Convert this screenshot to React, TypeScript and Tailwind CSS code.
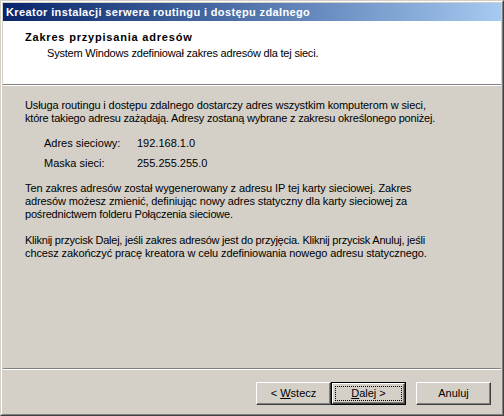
import React from "react";

const font = { fontFamily: '"Liberation Sans", Arial, sans-serif' };

function Btn({ children, def }: { children: React.ReactNode; def?: boolean }) {
  if (def) {
    return (
      <div className="w-[75px] h-[23px] border border-black">
        <div className="w-full h-full border border-t-white border-l-white border-r-[#404040] border-b-[#404040] shadow-[inset_-1px_-1px_0_#808080] flex items-center justify-center text-[11px] leading-[13px] text-black outline-1 outline-dotted outline-black outline-offset-[-4px]">
          <span className="whitespace-pre">{children}</span>
        </div>
      </div>
    );
  }
  return (
    <div className="w-[75px] h-[23px] border border-t-white border-l-white border-r-[#404040] border-b-[#404040] shadow-[inset_-1px_-1px_0_#808080] flex items-center justify-center text-[11px] leading-[13px] text-black">
      <span className="whitespace-pre">{children}</span>
    </div>
  );
}

export default function App() {
  return (
    <div
      className="w-[504px] h-[416px] border border-t-[#d4d0c8] border-l-[#d4d0c8] border-r-[#404040] border-b-[#404040] flex"
      style={font}
    >
      <div className="flex-1 border border-t-white border-l-white border-r-[#808080] border-b-[#808080] p-px bg-[#d4d0c8] flex flex-col">
        <div className="h-[18px] shrink-0 bg-gradient-to-r from-[#0a246a] to-[#a6caf0] flex items-center pl-[3px] text-white font-bold text-[11px] leading-[13px] tracking-[0.37px]">
          Kreator instalacji serwera routingu i dostępu zdalnego
        </div>
        <div className="h-[63px] shrink-0 bg-white pt-[10px] pl-[22px] text-black">
          <div className="font-bold text-[11px] leading-[13px] tracking-[0.8px]">Zakres przypisania adresów</div>
          <div className="text-[11px] leading-[13px] mt-[3px] pl-[22px] tracking-[-0.2px]">
            System Windows zdefiniował zakres adresów dla tej sieci.
          </div>
        </div>
        <div className="h-px bg-[#808080] shrink-0" />
        <div className="h-px bg-white shrink-0" />
        <div className="flex-1 pt-[13px] pl-[22px] pr-[4px] text-[11px] leading-[13px] text-black whitespace-nowrap">
          <div>
            <div className="tracking-[-0.11px]">Usługa routingu i dostępu zdalnego dostarczy adres wszystkim komputerom w sieci,</div>
            <div className="tracking-[-0.2px]">które takiego adresu zażądają. Adresy zostaną wybrane z zakresu określonego poniżej.</div>
          </div>
          <div className="mt-[12px] ml-[19px] flex flex-col gap-[7px]">
            <div className="flex">
              <span className="w-[93px]">Adres sieciowy:</span>
              <span>192.168.1.0</span>
            </div>
            <div className="flex">
              <span className="w-[93px]">Maska sieci:</span>
              <span>255.255.255.0</span>
            </div>
          </div>
          <div className="mt-[12px]">
            <div className="tracking-[-0.09px]">Ten zakres adresów został wygenerowany z adresu IP tej karty sieciowej. Zakres</div>
            <div className="tracking-[-0.11px]">adresów możesz zmienić, definiując nowy adres statyczny dla karty sieciowej za</div>
            <div className="tracking-[-0.19px]">pośrednictwem folderu Połączenia sieciowe.</div>
          </div>
          <div className="mt-[13px]">
            <div className="tracking-[-0.24px]">Kliknij przycisk Dalej, jeśli zakres adresów jest do przyjęcia. Kliknij przycisk Anuluj, jeśli</div>
            <div className="tracking-[-0.1px]">chcesz zakończyć pracę kreatora w celu zdefiniowania nowego adresu statycznego.</div>
          </div>
        </div>
        <div className="h-px bg-[#808080] shrink-0" />
        <div className="h-px bg-white shrink-0" />
        <div className="h-[43px] shrink-0 flex justify-end items-start pt-[12px] pr-[10px]">
          <Btn>
            {"< "}
            <span className="underline">W</span>
            {"stecz"}
          </Btn>
          <Btn def>
            <span className="underline">D</span>
            {"alej >"}
          </Btn>
          <div className="w-[10px]" />
          <Btn>Anuluj</Btn>
        </div>
      </div>
    </div>
  );
}
